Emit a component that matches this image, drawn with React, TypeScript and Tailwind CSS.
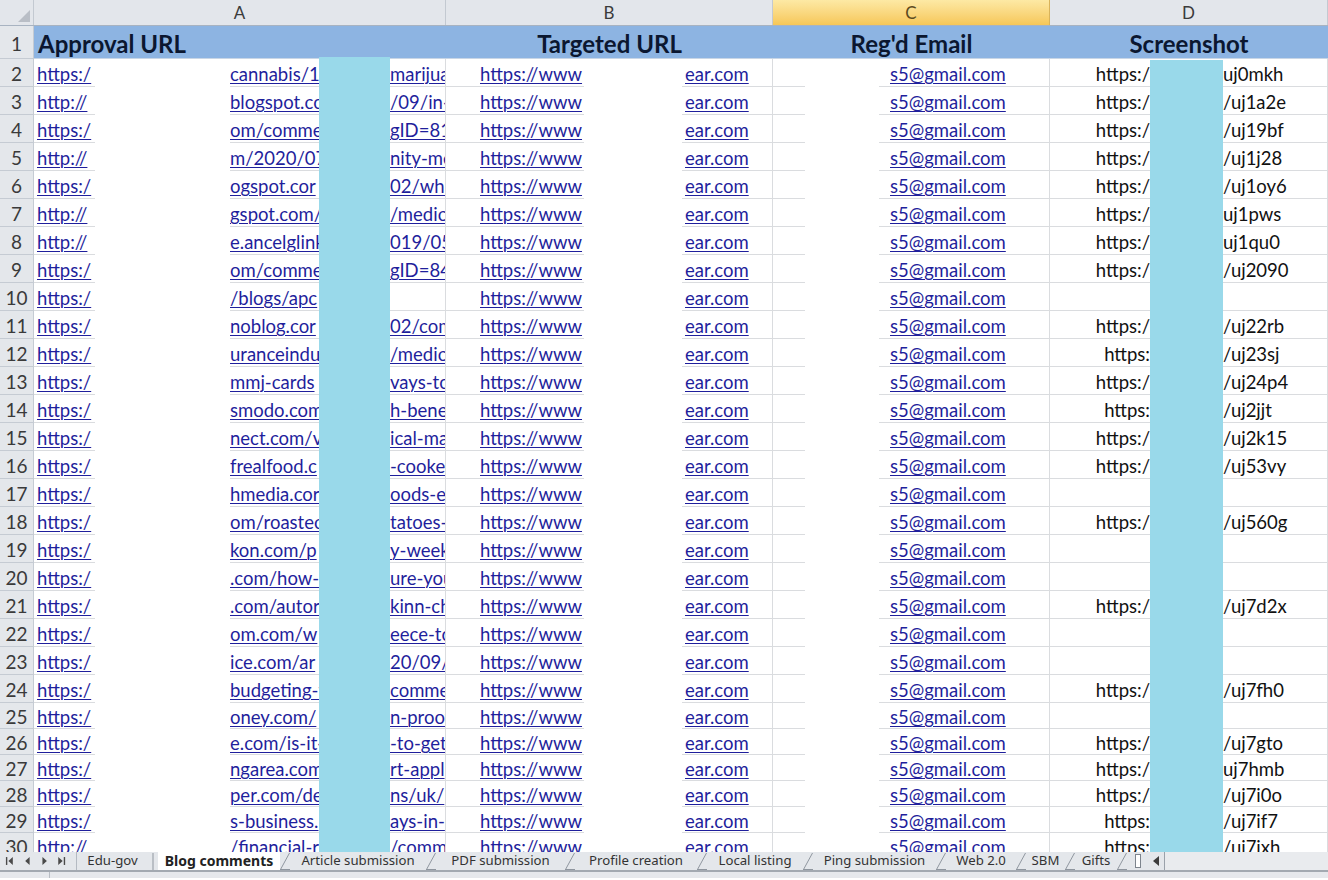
import React from "react";

type Row = {
  n: number;
  a: [string, string, string];
  d: [string, string] | null;
};

const A_PARTS: [string, string, string][] = [
  ["https:/", "cannabis/1", "marijua"],
  ["http://", "blogspot.co", "/09/in-"],
  ["https:/", "om/comme", "gID=81"],
  ["http://", "m/2020/07", "nity-me"],
  ["https:/", "ogspot.cor", "02/whil"],
  ["http://", "gspot.com/", "/medic"],
  ["http://", "e.ancelglink", "019/05/"],
  ["https:/", "om/comme", "gID=84"],
  ["https:/", "/blogs/apc", ""],
  ["https:/", "noblog.cor", "02/com"],
  ["https:/", "uranceindu", "/medic"],
  ["https:/", "mmj-cards", "vays-to"],
  ["https:/", "smodo.com", "h-bene"],
  ["https:/", "nect.com/v", "ical-ma"],
  ["https:/", "frealfood.c", "-cooke"],
  ["https:/", "hmedia.cor", "oods-ea"],
  ["https:/", "om/roastec", "tatoes-"],
  ["https:/", "kon.com/p", "y-week"],
  ["https:/", ".com/how-t", "ure-you"],
  ["https:/", ".com/autor", "kinn-ch"],
  ["https:/", "om.com/w", "eece-to"],
  ["https:/", "ice.com/ar", "20/09/"],
  ["https:/", "budgeting-v", "comme"],
  ["https:/", "oney.com/", "n-proof"],
  ["https:/", "e.com/is-it-", "-to-get"],
  ["https:/", "ngarea.com", "rt-appl"],
  ["https:/", "per.com/de", "ns/uk/"],
  ["https:/", "s-business.", "ays-in-"],
  ["http://", "/financial-r", "/comm"],
];

const D_PARTS: ([string, string] | null)[] = [
  ["https:/", "uj0mkh"],
  ["https:/", "/uj1a2e"],
  ["https:/", "/uj19bf"],
  ["https:/", "/uj1j28"],
  ["https:/", "/uj1oy6"],
  ["https:/", "uj1pws"],
  ["https:/", "uj1qu0"],
  ["https:/", "/uj2090"],
  null,
  ["https:/", "/uj22rb"],
  ["https:", "/uj23sj"],
  ["https:/", "/uj24p4"],
  ["https:", "/uj2jjt"],
  ["https:/", "/uj2k15"],
  ["https:/", "/uj53vy"],
  null,
  ["https:/", "/uj560g"],
  null,
  null,
  ["https:/", "/uj7d2x"],
  null,
  null,
  ["https:/", "/uj7fh0"],
  null,
  ["https:/", "/uj7gto"],
  ["https:/", "uj7hmb"],
  ["https:/", "/uj7i0o"],
  ["https:", "/uj7if7"],
  ["https:", "/uj7ixh"],
];

const ROWS: Row[] = A_PARTS.map((a, i) => ({ n: i + 2, a, d: D_PARTS[i] }));

const TABS: { label: string; w: string; active?: boolean }[] = [
  { label: "Edu-gov", w: "w-[71px]" },
  { label: "Blog comments", w: "w-[122px]", active: true },
  { label: "Article submission", w: "w-[136px]" },
  { label: "PDF submission", w: "w-[129px]" },
  { label: "Profile creation", w: "w-[122px]" },
  { label: "Local listing", w: "w-[96px]" },
  { label: "Ping submission", w: "w-[123px]" },
  { label: "Web 2.0", w: "w-[70px]" },
  { label: "SBM", w: "w-[39px]" },
  { label: "Gifts", w: "w-[42px]" },
];

const link = "text-[#1f1f9c] underline underline-offset-[2px] decoration-1";
const cellText = "whitespace-nowrap overflow-hidden";

export default function App() {
  return (
    <div className="w-[1328px] h-[880px] overflow-hidden bg-white font-['Lato',sans-serif] text-[18.5px] text-[#111]">
      <div className="relative h-[852px] overflow-hidden">
        {/* column letters */}
        <div className="flex h-[26px] border-b border-[#a8b3c1] text-[17px] text-[#3b3b3b]">
          <div className="relative w-[34px] shrink-0 bg-[#e3e6eb] border-r border-[#c3c9d1]">
            <svg className="absolute right-[3px] bottom-[3px]" width="12" height="12" viewBox="0 0 12 12">
              <polygon points="12,0 12,12 0,12" fill="#b9bec6" />
            </svg>
          </div>
          <ColHead label="A" w="w-[412px]" />
          <ColHead label="B" w="w-[327px]" />
          <div className="w-[277px] shrink-0 flex items-center justify-center bg-gradient-to-b from-[#fde9a4] to-[#f6c757] border-r border-[#d9b35a] text-[#5b4a1f]">
            C
          </div>
          <ColHead label="D" w="w-[278px]" />
        </div>

        {/* header row */}
        <div className="flex h-[33px] text-[24px] font-bold text-[#0b1730]">
          <RowNum n={1} />
          <div className="flex-1 flex items-center bg-[#8db4e2] border-b border-[#c9d6e6] pt-[4px]">
            <div className="w-[412px] pl-[4px]">Approval URL</div>
            <div className="w-[327px] text-center">Targeted URL</div>
            <div className="w-[277px] text-center">Reg'd Email</div>
            <div className="w-[278px] text-center">Screenshot</div>
          </div>
        </div>

        {ROWS.map((r) => (
          <DataRow key={r.n} r={r} />
        ))}

        {/* redaction boxes */}
        <div className="absolute left-[95px] top-[59px] w-[135px] bottom-0 bg-white" />
        <div className="absolute left-[584px] top-[59px] w-[98px] bottom-0 bg-white" />
        <div className="absolute left-[805px] top-[59px] w-[74px] bottom-0 bg-white" />
        <div className="absolute left-[319px] top-[57px] w-[71px] bottom-0 bg-[#99d9ea]" />
        <div className="absolute left-[1150px] top-[60px] w-[73px] bottom-0 bg-[#99d9ea]" />
      </div>

      <TabBar />

      <div className="h-[2px] bg-[#a3a9b1]" />
      <div className="flex h-[6px] bg-[#e6e8ec]">
        <div className="w-[50px] border-r border-[#b8bdc4]" />
      </div>
    </div>
  );
}

function ColHead({ label, w }: { label: string; w: string }) {
  return (
    <div className={`${w} shrink-0 flex items-center justify-center bg-[#e3e6eb] border-r border-[#c3c9d1]`}>
      {label}
    </div>
  );
}

function RowNum({ n }: { n: number }) {
  return (
    <div className="w-[34px] shrink-0 flex items-center justify-center bg-[#e4e7eb] border-r border-b border-[#c5cbd3] pt-[4px] text-[19px] font-normal text-[#3a3a3a]">
      {n}
    </div>
  );
}

function DataRow({ r }: { r: Row }) {
  const h = r.n >= 25 ? "h-[26px]" : "h-[28px]";
  const grid = "border-b border-r border-[#dadcdf] pt-[5px]";
  return (
    <div className={`flex ${h}`}>
      <RowNum n={r.n} />
      {/* A */}
      <div className={`w-[412px] shrink-0 flex items-center ${grid}`}>
        <div className={`w-[61px] pl-[3px] ${cellText}`}>
          <span className={link}>{r.a[0]}</span>
        </div>
        <div className="w-[135px]" />
        <div className={`w-[89px] ${cellText}`}>
          <span className={link}>{r.a[1]}</span>
        </div>
        <div className="w-[71px]" />
        <div className={`w-[55px] ${cellText}`}>
          <span className={link}>{r.a[2]}</span>
        </div>
      </div>
      {/* B */}
      <div className={`w-[327px] shrink-0 flex items-center ${grid}`}>
        <div className={`w-[138px] pl-[34px] ${cellText}`}>
          <span className={link}>https://www</span>
        </div>
        <div className="w-[98px]" />
        <div className={`w-[90px] pl-[3px] ${cellText}`}>
          <span className={link}>ear.com</span>
        </div>
      </div>
      {/* C */}
      <div className={`w-[277px] shrink-0 flex items-center ${grid}`}>
        <div className={`pl-[117px] ${cellText}`}>
          <span className={link}>s5@gmail.com</span>
        </div>
      </div>
      {/* D */}
      <div className={`w-[278px] shrink-0 flex items-center ${grid} text-[#111]`}>
        <div className={`w-[100px] text-right ${cellText}`}>{r.d ? r.d[0] : ""}</div>
        <div className="w-[73px]" />
        <div className={`flex-1 ${cellText}`}>{r.d ? r.d[1] : ""}</div>
      </div>
    </div>
  );
}

function Slash({ straight }: { straight?: boolean }) {
  return (
    <svg width="10" height="18" viewBox="0 0 10 18" className="shrink-0">
      {straight ? (
        <line x1="5" y1="1" x2="5" y2="18" stroke="#8f969f" strokeWidth="1" />
      ) : (
        <>
          <line x1="0.5" y1="17.5" x2="9.5" y2="1" stroke="#8f969f" strokeWidth="1" />
          <line x1="0" y1="17.5" x2="10" y2="17.5" stroke="#8f969f" strokeWidth="1" />
        </>
      )}
    </svg>
  );
}

function TabBar() {
  return (
    <div className="flex h-[18px] bg-[#e4e7eb] font-['Noto_Sans',sans-serif] text-[13.2px] text-[#333] leading-none">
      <div className="w-[77px] shrink-0 flex items-center border-r border-[#b4bac2] text-[#4a4a4a]">
        <svg width="77" height="18" viewBox="0 0 77 18">
          <rect x="6" y="5" width="1.4" height="8" fill="#4a4a4a" />
          <polygon points="13,5 13,13 8.5,9" fill="#4a4a4a" />
          <polygon points="30,5 30,13 25.5,9" fill="#4a4a4a" />
          <polygon points="43,5 43,13 47.5,9" fill="#4a4a4a" />
          <polygon points="59,5 59,13 63.5,9" fill="#4a4a4a" />
          <rect x="64.6" y="5" width="1.4" height="8" fill="#4a4a4a" />
        </svg>
      </div>
      {TABS.map((t, i) => (
        <React.Fragment key={t.label}>
          <div
            className={`${t.w} shrink-0 flex items-center justify-center whitespace-nowrap ${
              t.active ? "bg-white font-bold text-[14px] text-[#222]" : ""
            }`}
          >
            {t.label}
          </div>
          <Slash straight={i === 0} />
        </React.Fragment>
      ))}
      <div className="w-[21px] shrink-0 flex items-center justify-center">
        <div className="w-[6px] h-[14px] border border-[#7d848d] bg-white" />
      </div>
      <div className="w-[17px] shrink-0 flex items-center justify-center border-r border-[#9aa1aa]">
        <svg width="8" height="10" viewBox="0 0 8 10">
          <polygon points="7,0 7,10 1,5" fill="#3c3c3c" />
        </svg>
      </div>
      <div className="flex-1 bg-[#e9ebee]" />
    </div>
  );
}
